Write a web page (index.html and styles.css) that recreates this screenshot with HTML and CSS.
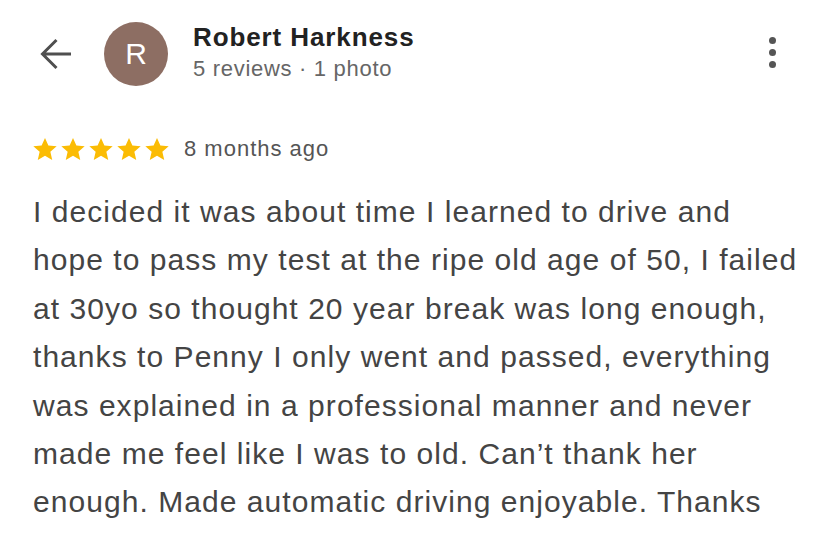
FILE: index.html
```html
<!DOCTYPE html>
<html>
<head>
<meta charset="utf-8">
<link rel="stylesheet" href="styles.css">
</head>
<body>
<div class="page">
  <header class="top">
    <button class="back" aria-label="Back">
      <svg width="32" height="32" viewBox="0 0 32 32"><path d="M31 16H3M16.5 2L2.5 16l14 14" fill="none" stroke="#4f4f4f" stroke-width="3"/></svg>
    </button>
    <div class="avatar">R</div>
    <div class="who">
      <div class="name">Robert Harkness</div>
      <div class="meta">5 reviews · 1 photo</div>
    </div>
    <div class="more">
      <span class="dot"></span><span class="dot"></span><span class="dot"></span>
    </div>
  </header>
  <div class="rating">
    <div class="stars">
      <svg class="star" viewBox="0 0 24 24"><path d="M12 2.5l2.9 6.6 7.1.6-5.4 4.7 1.6 7-6.2-3.7-6.2 3.7 1.6-7L2 9.7l7.1-.6z"/></svg>
      <svg class="star" viewBox="0 0 24 24"><path d="M12 2.5l2.9 6.6 7.1.6-5.4 4.7 1.6 7-6.2-3.7-6.2 3.7 1.6-7L2 9.7l7.1-.6z"/></svg>
      <svg class="star" viewBox="0 0 24 24"><path d="M12 2.5l2.9 6.6 7.1.6-5.4 4.7 1.6 7-6.2-3.7-6.2 3.7 1.6-7L2 9.7l7.1-.6z"/></svg>
      <svg class="star" viewBox="0 0 24 24"><path d="M12 2.5l2.9 6.6 7.1.6-5.4 4.7 1.6 7-6.2-3.7-6.2 3.7 1.6-7L2 9.7l7.1-.6z"/></svg>
      <svg class="star" viewBox="0 0 24 24"><path d="M12 2.5l2.9 6.6 7.1.6-5.4 4.7 1.6 7-6.2-3.7-6.2 3.7 1.6-7L2 9.7l7.1-.6z"/></svg>
    </div>
    <span class="when">8 months ago</span>
  </div>
  <p class="text">I decided it was about time I learned to drive and<br>hope to pass my test at the ripe old age of 50, I failed<br>at 30yo so thought 20 year break was long enough,<br>thanks to Penny I only went and passed, everything<br>was explained in a professional manner and never<br>made me feel like I was to old. Can’t thank her<br>enough. Made automatic driving enjoyable. Thanks</p>
</div>
</body>
</html>
```

FILE: styles.css
```css
html, body {
  margin: 0;
  padding: 0;
  background: #fff;
}
body {
  font-family: "Liberation Sans", Arial, Helvetica, sans-serif;
  width: 828px;
  height: 533px;
  overflow: hidden;
}
.page {
  padding: 22px 0 0 33px;
}
.top {
  display: flex;
  align-items: center;
  height: 64px;
}
.back {
  border: 0;
  background: none;
  padding: 0;
  width: 32px;
  height: 32px;
  display: flex;
  align-items: center;
  justify-content: center;
  margin-left: 7px;
}
.avatar {
  width: 64px;
  height: 64px;
  border-radius: 50%;
  background: #8d6e63;
  color: #fff;
  font-family: "Liberation Sans", Arial, sans-serif;
  font-size: 30px;
  display: flex;
  align-items: center;
  justify-content: center;
  margin-left: 32px;
}
.who {
  margin-left: 25px;
  flex: 1;
  display: flex;
  flex-direction: column;
  margin-top: -2px;
}
.name {
  font-family: "Liberation Sans", Arial, sans-serif;
  font-size: 26px;
  font-weight: bold;
  letter-spacing: 0.9px;
  color: #222;
  line-height: 32px;
}
.meta {
  font-family: "Liberation Sans", Arial, sans-serif;
  font-size: 22px;
  letter-spacing: 0.7px;
  color: #666;
  line-height: 32px;
}
.more {
  display: flex;
  flex-direction: column;
  gap: 5px;
  margin-right: 52px;
  margin-top: -4px;
}
.dot {
  width: 7px;
  height: 7px;
  border-radius: 50%;
  background: #555;
}
.rating {
  display: flex;
  align-items: center;
  margin-top: 48px;
  height: 30px;
}
.stars {
  display: flex;
  margin-left: -2px;
}
.star {
  width: 28px;
  height: 28px;
  fill: #fbbc04;
}
.when {
  font-family: "Liberation Sans", Arial, sans-serif;
  margin-left: 13px;
  font-size: 22px;
  letter-spacing: 1px;
  color: #555;
}
.text {
  font-family: "Liberation Sans", Arial, sans-serif;
  margin: 24px 0 0;
  font-size: 30px;
  letter-spacing: 1.05px;
  line-height: 48.4px;
  color: #444;
}
```
